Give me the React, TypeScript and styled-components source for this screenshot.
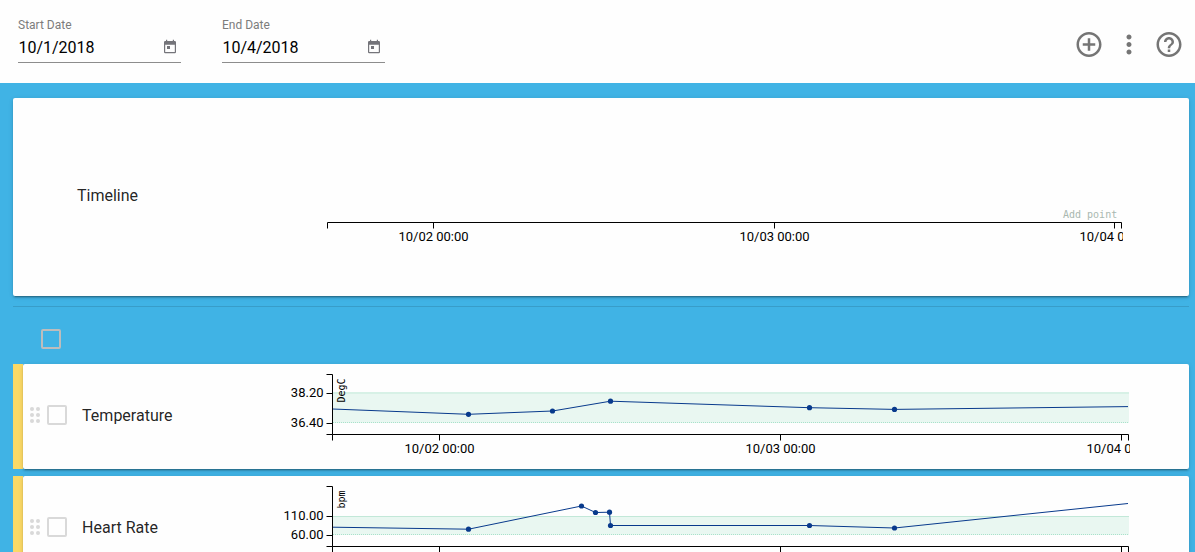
import React from "react";
import styled, { createGlobalStyle } from "styled-components";

const GlobalStyle = createGlobalStyle`
  * { box-sizing: border-box; }
  html, body { margin: 0; height: 100%; overflow: hidden; }
  body { font-family: Roboto, "Open Sans", sans-serif; background: #40b3e5; color: rgba(0, 0, 0, 0.87); }
  #root { height: 100%; }
`;

const Page = styled.div`
  display: flex;
  flex-direction: column;
  height: 552px;
  overflow: hidden;
`;

const Toolbar = styled.header`
  display: flex;
  flex: none;
  justify-content: space-between;
  height: 83px;
  padding: 0 10px 0 18px;
  background: #fefefe;
`;

const Dates = styled.div`
  display: flex;
  gap: 41px;
  padding-top: 17px;
`;

const Field = styled.label`
  display: flex;
  flex-direction: column;
  width: 163px;
  height: 46px;
  border-bottom: 1px solid #8d8d8d;
`;

const FieldLabel = styled.span`
  height: 15px;
  font-size: 12px;
  line-height: 17px;
  color: #7c7c7c;
`;

const FieldRow = styled.span`
  display: flex;
  align-items: center;
  justify-content: space-between;
  height: 30px;
  padding-right: 3px;
`;

const FieldValue = styled.span`
  padding-left: 0.4px;
  font-size: 16px;
  color: #000;
`;

const Actions = styled.div`
  display: flex;
  align-items: center;
  gap: 10px;
  height: 88px;
  margin-right: 1px;
`;

const Action = styled.button`
  display: flex;
  justify-content: center;
  width: 30px;
  padding: 0;
  border: 0;
  background: none;
  color: #757575;
`;

const Content = styled.main`
  display: flex;
  flex-direction: column;
  padding: 15px 6px 0 13px;
`;

const Card = styled.section<{ $height: number }>`
  display: flex;
  flex: 1;
  min-width: 0;
  height: ${(p) => p.$height}px;
  background: #fefefe;
  border-radius: 2px;
  box-shadow: 0 3px 1px -2px rgba(0, 0, 0, 0.2), 0 2px 2px 0 rgba(0, 0, 0, 0.14),
    0 1px 5px 0 rgba(0, 0, 0, 0.12);
`;

const TimelineRow = styled.div`
  display: flex;
`;

const TimelineLabel = styled.div`
  display: flex;
  align-items: center;
  width: 260px;
  padding: 0 0 3px 64px;
  font-size: 16px;
`;

const SelectAll = styled.div`
  display: flex;
  align-items: center;
  height: 58px;
  margin-top: 10px;
  padding: 7px 0 0 28px;
  border-top: 1px solid rgba(0, 0, 0, 0.12);
`;

const Checkbox = styled.span<{ $color: string }>`
  width: 20px;
  height: 20px;
  flex: none;
  border: 2px solid ${(p) => p.$color};
  border-radius: 2px;
`;

const Rows = styled.div`
  display: flex;
  flex-direction: column;
  gap: 7px;
`;

const Row = styled.div`
  display: flex;
  background: linear-gradient(to right, #fbd966 10px, transparent 10px);
`;

const RowHeader = styled.div`
  display: flex;
  align-items: center;
  width: 250px;
  padding: 0 0 3px 7px;
  font-size: 16px;
`;

const RowName = styled.span`
  margin-left: 15.1px;
`;

const Spine = styled.div`
  width: 10px;
`;

const Chart = styled.svg`
  display: block;
  flex: none;
  font-size: 13px;
  fill: #000;
`;

const Grip = styled.svg`
  display: block;
  margin-right: 7px;
  fill: #d9d9d9;
`;

const CalendarIcon = () => (
  <svg width="16" height="16" viewBox="0 0 16 16" fill="#74747a">
    <path d="M4 0.8h1.2V2h5.6V0.8H12V2h0.8Q14 2 14 3.2V13Q14 14.2 12.8 14.2H3.2Q2 14.2 2 13V3.2Q2 2 3.2 2H4zM3.2 5.8V13h9.6V5.8zM5 7h3v3H5z" fillRule="evenodd" />
  </svg>
);

const DateField = ({ label, value }: { label: string; value: string }) => (
  <Field>
    <FieldLabel>{label}</FieldLabel>
    <FieldRow>
      <FieldValue>{value}</FieldValue>
      <CalendarIcon />
    </FieldRow>
  </Field>
);

const ActionIcon = ({ d }: { d: string }) => (
  <Action>
    <svg width="30" height="30" viewBox="0 -0.4 24 24" fill="currentColor">
      <path d={d} />
    </svg>
  </Action>
);

const ADD = "M13 7h-2v4H7v2h4v4h2v-4h4v-2h-4V7zm-1-5C6.48 2 2 6.48 2 12s4.48 10 10 10 10-4.48 10-10S17.52 2 12 2zm0 18c-4.41 0-8-3.59-8-8s3.59-8 8-8 8 3.59 8 8-3.59 8-8 8z";
const MORE = "M12 8c1.1 0 2-.9 2-2s-.9-2-2-2-2 .9-2 2 .9 2 2 2zm0 2c-1.1 0-2 .9-2 2s.9 2 2 2 2-.9 2-2-.9-2-2-2zm0 6c-1.1 0-2 .9-2 2s.9 2 2 2 2-.9 2-2-.9-2-2-2z";
const HELP = "M11 18h2v-2h-2v2zm1-16C6.48 2 2 6.48 2 12s4.48 10 10 10 10-4.48 10-10S17.52 2 12 2zm0 18c-4.41 0-8-3.59-8-8s3.59-8 8-8 8 3.59 8 8-3.59 8-8 8zm0-14c-2.21 0-4 1.79-4 4h2c0-1.1.9-2 2-2s2 .9 2 2c0 2-3 1.75-3 5h2c0-2.25 3-2.5 3-5 0-2.21-1.79-4-4-4z";

const MONO = '"DejaVu Sans Mono", monospace';

interface AxisProps {
  start: number;
  end: number;
  y: number;
  ticks: number[];
}

const TICK_LABELS = ["10/02 00:00", "10/03 00:00", "10/04 00:00"];

const TimeAxis = ({ start, end, y, ticks }: AxisProps) => (
  <g>
    <path
      d={`M${start} ${y + 6}V${y}H${end}V${y + 6}` + ticks.map((t) => `M${t} ${y}v6`).join("")}
      fill="none"
      stroke="#000"
    />
    {ticks.map((t, i) => (
      <text key={t} x={t} y={y + 18.5} textAnchor="middle">
        {TICK_LABELS[i]}
      </text>
    ))}
  </g>
);

interface Series {
  name: string;
  unit: string;
  high: { label: string; y: number };
  low: { label: string; y: number };
  bandTop: number;
  bandBottom: number;
  topWidth: number;
  start: number;
  end: number;
  points: [number, number][];
}

const SERIES: Series[] = [
  {
    name: "Temperature",
    unit: "DegC",
    high: { label: "38.20", y: 29.5 },
    low: { label: "36.40", y: 59.5 },
    bandTop: 28,
    bandBottom: 59,
    topWidth: 2,
    start: 45,
    end: 42.6,
    points: [[468.5, 50.3], [552.5, 47], [610.5, 37.2], [809.5, 43.7], [894.5, 45.4]],
  },
  {
    name: "Heart Rate",
    unit: "bpm",
    high: { label: "110.00", y: 40.5 },
    low: { label: "60.00", y: 59.5 },
    bandTop: 40,
    bandBottom: 59,
    topWidth: 1,
    start: 51.2,
    end: 27.5,
    points: [[468.5, 53.2], [581.5, 30], [595.5, 36.5], [609.5, 36.2], [610.5, 49.5], [809.5, 49.5], [894.5, 52]],
  },
];

const SeriesChart = ({ s }: { s: Series }) => (
  <Chart width="857" height="105" viewBox="273 0 857 105">
    <rect x="333" y={s.bandTop} width="796" height={s.bandBottom - s.bandTop} fill="#e9f7f1" />
    <rect x="333" y={s.bandTop} width="796" height={s.topWidth} fill={s.topWidth > 1 ? "#d7f1e6" : "#c2e8d8"} />
    <path d={`M333 ${s.bandBottom - 0.5}H1129`} stroke="#a9e2cb" strokeDasharray="1 1" />
    <path
      d={`M332.5 ${s.start}` + s.points.map(([x, y]) => `L${x} ${y}`).join("") + `L1128 ${s.end}`}
      fill="none"
      stroke="#083a8c"
    />
    {s.points.map(([x, y]) => (
      <circle key={x} cx={x} cy={y} r="2.6" fill="#083a8c" />
    ))}
    <path
      d={`M326.5 10.5H332.5V70.5H326.5M326.5 ${s.high.y}h6M326.5 ${s.low.y}h6`}
      fill="none"
      stroke="#000"
    />
    {[s.high, s.low].map((t) => (
      <text key={t.label} x="323.5" y={t.y + 3.5} textAnchor="end">
        {t.label}
      </text>
    ))}
    <text transform="translate(345 14.5) rotate(-90)" textAnchor="end" fontSize="10" fontFamily={MONO}>
      {s.unit}
    </text>
    <TimeAxis start={332.5} end={1128.5} y={70.5} ticks={[439.5, 780.5, 1121.5]} />
  </Chart>
);

const DragHandle = () => (
  <Grip width="10" height="16" viewBox="0 0 10 16">
    {[2, 8].map((x) => [2, 8, 14].map((y) => <circle key={`${x}-${y}`} cx={x} cy={y} r="2" />))}
  </Grip>
);

export default function App() {
  return (
    <Page>
      <GlobalStyle />
      <Toolbar>
        <Dates>
          <DateField label="Start Date" value="10/1/2018" />
          <DateField label="End Date" value="10/4/2018" />
        </Dates>
        <Actions>
          <ActionIcon d={ADD} />
          <ActionIcon d={MORE} />
          <ActionIcon d={HELP} />
        </Actions>
      </Toolbar>
      <Content>
        <TimelineRow>
          <Card $height={198}>
            <TimelineLabel>Timeline</TimelineLabel>
            <Chart width="850" height="198" viewBox="273 0 850 198">
              <text x="1063" y="120" fontSize="10" fontFamily={MONO} fill="#a9b8b0">
                Add point
              </text>
              <TimeAxis start={327.5} end={1121.5} y={124.5} ticks={[433.5, 774.5, 1114.5]} />
            </Chart>
          </Card>
        </TimelineRow>
        <SelectAll>
          <Checkbox $color="#bdbdbd" />
        </SelectAll>
        <Rows>
          {SERIES.map((s) => (
            <Row key={s.name}>
              <Spine />
              <Card $height={105}>
                <RowHeader>
                  <DragHandle />
                  <Checkbox $color="#d9d9d9" />
                  <RowName>{s.name}</RowName>
                </RowHeader>
                <SeriesChart s={s} />
              </Card>
            </Row>
          ))}
        </Rows>
      </Content>
    </Page>
  );
}
